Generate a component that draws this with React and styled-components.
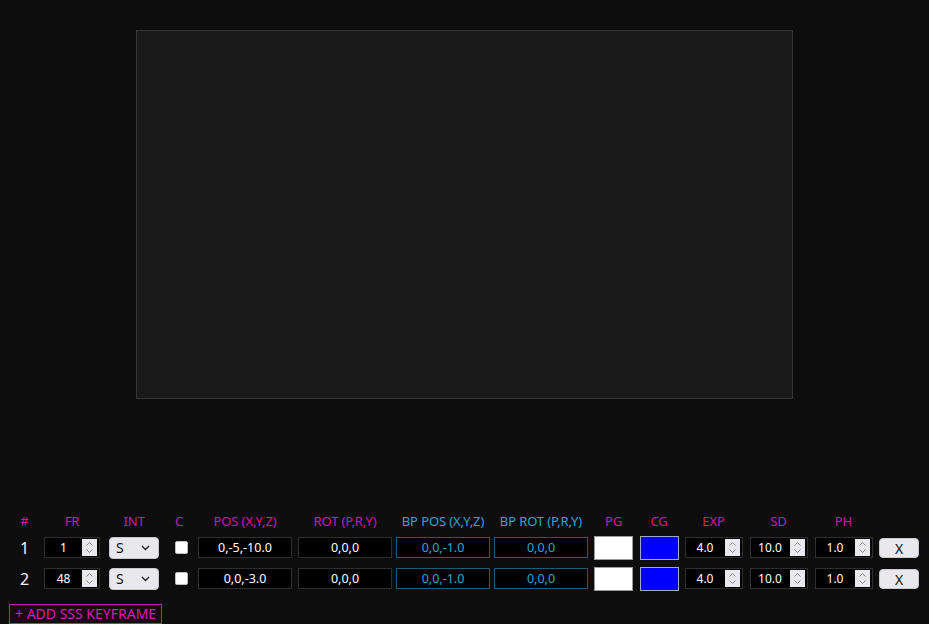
import React from 'react';
import styled, { createGlobalStyle } from 'styled-components';

const GlobalStyle = createGlobalStyle`
  html, body { margin: 0; padding: 0; background: #0d0d0d; }
  body { font-family: "Noto Sans", "Open Sans", sans-serif; color: #fff; }
  * { box-sizing: border-box; }
`;

const Page = styled.div`
  height: 100vh;
  display: flex;
  flex-direction: column;
  overflow: hidden;
`;

const Stage = styled.div`
  width: 657px;
  height: 369px;
  margin: 30px auto 0;
  background: #1a1a1a;
  border: 1px solid #353535;
`;

const Panel = styled.div`
  margin-top: auto;
  padding-left: 9px;
`;

const Grid = styled.div`
  display: grid;
  grid-template-columns: 31px 64px 60px 30px 102px 98px 98px 98px 47px 44px 65px 65px 65px 46px;
  grid-template-rows: 22px 31px 31px;
  align-items: center;
  justify-items: center;
`;

const Head = styled.div`
  font-size: 13px;
  letter-spacing: -0.1px;
  color: ${p => (p.$bp ? '#2ea6cf' : '#cc18a8')};
`;

const RowNum = styled.div`
  font-size: 16px;
  color: #f2f2f2;
`;

const TextField = styled.input`
  width: 94px;
  height: 21px;
  background: #000;
  border: 1px solid ${p => (p.$bp ? '#1d5c76' : '#2e2e2e')};
  color: ${p => (p.$bp ? '#2ea6cf' : '#fff')};
  font-family: inherit;
  font-size: 12.5px;
  text-align: center;
  padding: 0;
  outline: none;
`;

const NumBox = styled.div`
  width: ${p => p.$w}px;
  height: 21px;
  background: #000;
  border: 1px solid #2e2e2e;
  display: flex;
  align-items: center;
  padding-right: 2px;
`;

const NumInput = styled.input`
  flex: 1;
  min-width: 0;
  height: 100%;
  background: transparent;
  border: none;
  color: #fff;
  font-family: inherit;
  font-size: 12px;
  text-align: center;
  padding: 0;
  outline: none;
`;

const Spin = styled.div`
  width: 15px;
  height: 17px;
  background: #e9e9ed;
  display: flex;
  align-items: center;
  justify-content: center;
`;

const SelectBox = styled.div`
  width: 50px;
  height: 22px;
  background: #e9e9ed;
  border: 1px solid #c8c8ce;
  border-radius: 4px;
  display: flex;
  align-items: center;
  justify-content: space-between;
  padding: 0 8px 0 6px;
  color: #111;
  font-size: 14px;
`;

const Check = styled.input`
  appearance: none;
  width: 13px;
  height: 13px;
  margin: 0 0 0 5px;
  background: #fff;
  border: 1px solid #bdbdbd;
  border-radius: 2px;
`;

const Swatch = styled.div`
  width: 39px;
  height: 24px;
  background: ${p => p.$color};
  border: 1px solid ${p => (p.$color === '#ffffff' ? '#9a9a9a' : '#a6a6c8')};
`;

const DelButton = styled.button`
  width: 40px;
  height: 20px;
  background: #e9e9ed;
  border: 1px solid #c8c8ce;
  border-radius: 4px;
  color: #111;
  font-family: inherit;
  font-size: 14px;
  padding: 0;
`;

const AddButton = styled.button`
  margin-top: 10px;
  height: 20px;
  padding: 0 5px;
  background: #1a0713;
  border: 1px solid #c91ba5;
  color: #d21fb0;
  font-family: inherit;
  font-size: 14px;
  line-height: 18px;
`;

const SpinIcon = () => (
  <Spin>
    <svg width="9" height="13" viewBox="0 0 9 13" fill="none" stroke="#8a8a8a" strokeWidth="1">
      <path d="M1.5 4.5 L4.5 1.5 L7.5 4.5" />
      <path d="M1.5 8.5 L4.5 11.5 L7.5 8.5" />
    </svg>
  </Spin>
);

const Num = ({ value, w }) => (
  <NumBox $w={w}>
    <NumInput type="text" defaultValue={value} />
    <SpinIcon />
  </NumBox>
);

const Chevron = () => (
  <svg width="9" height="6" viewBox="0 0 9 6" fill="none" stroke="#222" strokeWidth="1.4">
    <path d="M1 1 L4.5 4.5 L8 1" />
  </svg>
);

const headers = [
  ['#'], ['FR'], ['INT'], ['C'], ['POS (X,Y,Z)'], ['ROT (P,R,Y)'],
  ['BP POS (X,Y,Z)', true], ['BP ROT (P,R,Y)', true],
  ['PG'], ['CG'], ['EXP'], ['SD'], ['PH'], [''],
];

const keyframes = [
  { id: 1, fr: '1', pos: '0,-5,-10.0', rot: '0,0,0', bpPos: '0,0,-1.0', bpRot: '0,0,0', exp: '4.0', sd: '10.0', ph: '1.0' },
  { id: 2, fr: '48', pos: '0,0,-3.0', rot: '0,0,0', bpPos: '0,0,-1.0', bpRot: '0,0,0', exp: '4.0', sd: '10.0', ph: '1.0' },
];

export default function App() {
  return (
    <Page>
      <GlobalStyle />
      <Stage />
      <Panel>
        <Grid>
          {headers.map(([label, bp], i) => (
            <Head key={i} $bp={bp}>{label}</Head>
          ))}
          {keyframes.map(k => (
            <React.Fragment key={k.id}>
              <RowNum>{k.id}</RowNum>
              <Num value={k.fr} w={56} />
              <SelectBox>S<Chevron /></SelectBox>
              <Check type="checkbox" />
              <TextField defaultValue={k.pos} />
              <TextField defaultValue={k.rot} />
              <TextField $bp defaultValue={k.bpPos} />
              <TextField $bp defaultValue={k.bpRot} />
              <Swatch $color="#ffffff" />
              <Swatch $color="#0000ff" />
              <Num value={k.exp} w={58} />
              <Num value={k.sd} w={58} />
              <Num value={k.ph} w={58} />
              <DelButton>X</DelButton>
            </React.Fragment>
          ))}
        </Grid>
        <AddButton>+ ADD SSS KEYFRAME</AddButton>
      </Panel>
    </Page>
  );
}
